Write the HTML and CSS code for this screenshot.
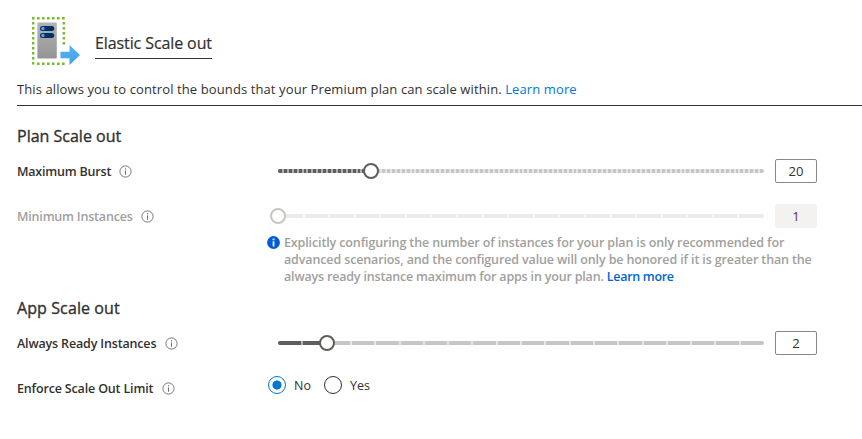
FILE: index.html
```html
<!DOCTYPE html>
<html lang="en">
<head>
<meta charset="utf-8">
<title>Elastic Scale out</title>
<link rel="stylesheet" href="styles.css">
</head>
<body>
<svg class="defs" width="0" height="0" aria-hidden="true">
  <symbol id="info" viewBox="0 0 13 13">
    <circle cx="6.5" cy="6.5" r="5.6" fill="none" stroke="#797775" stroke-width="1"/>
    <path d="M6 3.3h1v1.2H6zM6 5.5h1v4.2H6z" fill="#706e6c"/>
  </symbol>
</svg>
<header class="head">
  <svg class="logo" width="50" height="50" viewBox="0 0 50 50">
    <defs>
      <linearGradient id="tower" x1="0" y1="0" x2="0" y2="1"><stop offset="0" stop-color="#b3b3b3"/><stop offset="1" stop-color="#949494"/></linearGradient>
      <linearGradient id="arrow" x1="0" y1="0" x2="0" y2="1"><stop offset="0" stop-color="#5ab4f5"/><stop offset="1" stop-color="#3f9fea"/></linearGradient>
    </defs>
    <g fill="none" stroke="#76bc2d" stroke-width="2.4" stroke-dasharray="2.6 2.4">
      <path d="M1 2.2H34"/><path d="M2.2 6V50"/><path d="M32.8 6V29"/><path d="M6 47.8H34"/>
    </g>
    <rect x="6.4" y="6.6" width="19.4" height="35.8" rx="1" fill="url(#tower)"/>
    <rect x="9" y="10" width="14.2" height="5" rx="2.5" fill="#003067"/>
    <rect x="9" y="17" width="14.2" height="5" rx="2.5" fill="#003067"/>
    <circle cx="11.9" cy="12.5" r="1.7" fill="#5ea0ef"/><circle cx="11.9" cy="19.5" r="1.7" fill="#5ea0ef"/>
    <path d="M29.5 35.8h9V29L49 39.1 38.5 49v-6.7h-9z" fill="url(#arrow)"/>
  </svg>
  <h1 class="title">Elastic Scale out</h1>
</header>
<p class="intro">This allows you to control the bounds that your Premium plan can scale within. <a class="link">Learn more</a></p>

<section class="plan">
  <h2 class="section-title">Plan Scale out</h2>
  <div class="row">
    <div class="label"><span>Maximum Burst</span><svg class="info"><use href="#info"/></svg></div>
    <div class="slider" data-steps="99" data-value="19"></div>
    <div class="value">20</div>
  </div>
  <div class="row row-min">
    <div class="label muted"><span>Minimum Instances</span><svg class="info"><use href="#info"/></svg></div>
    <div class="slider disabled" data-steps="19" data-value="0"></div>
    <div class="value off">1</div>
  </div>
  <div class="hint">
    <svg class="hint-icon" viewBox="0 0 13 13"><circle cx="6.5" cy="6.5" r="6.4" fill="#015cda"/><path d="M5.6 2.4h1.9v1.8H5.6zM5.6 5.2h1.9v5.4H5.6z" fill="#dce9fb"/></svg>
    <div class="hint-text">
      <div>Explicitly configuring the number of instances for your plan is only recommended for</div>
      <div>advanced scenarios, and the configured value will only be honored if it is greater than the</div>
      <div class="hint-last">always ready instance maximum for apps in your plan. <a class="link hint-link">Learn more</a></div>
    </div>
  </div>
</section>

<section class="app">
  <h2 class="section-title app-title">App Scale out</h2>
  <div class="row">
    <div class="label label-app"><span>Always Ready Instances</span><svg class="info"><use href="#info"/></svg></div>
    <div class="slider" data-steps="20" data-value="2"></div>
    <div class="value">2</div>
  </div>
  <div class="row row-limit">
    <div class="label label-app"><span>Enforce Scale Out Limit</span><svg class="info"><use href="#info"/></svg></div>
    <div class="radios">
      <span class="radio on"></span><span class="choice">No</span>
      <span class="radio"></span><span class="choice">Yes</span>
    </div>
  </div>
</section>
<script src="slider.js"></script>
</body>
</html>
```

FILE: styles.css
```css
* { box-sizing: border-box; }
body {
  margin: 0;
  padding: 16px 0 0 17px;
  background: #fff;
  color: #323130;
  font: 13px/17px "Open Sans", "Noto Sans", sans-serif;
  overflow: hidden;
}
.defs { position: absolute; }
h1, h2, p { margin: 0; }
.head { display: flex; height: 63px; padding-left: 14px; }
.logo { flex: none; }
.title {
  height: 43px;
  width: 117px;
  margin-left: 14px;
  padding-top: 15px;
  border-bottom: 1px solid #323130;
  font-size: 16px;
  line-height: 24px;
  font-weight: 400;
  letter-spacing: -0.1px;
  -webkit-text-stroke: 0.2px;
  white-space: nowrap;
}
.intro { height: 27px; padding-top: 2px; border-bottom: 1px solid #323130; letter-spacing: 0.105px; white-space: nowrap; }
.link { color: #0078d4; }
.section-title { font-size: 16px; line-height: 24px; font-weight: 400; -webkit-text-stroke: 0.35px; white-space: nowrap; }
.app-title { letter-spacing: 0.1px; }
.plan { padding-top: 18px; height: 190px; }
.app { height: 130px; }
.row { display: flex; align-items: center; height: 24px; margin-top: 11px; }
.row-min { margin-top: 21px; }
.row-limit { margin-top: 21px; }
.label { display: flex; align-items: center; width: 261px; font-weight: 600; font-size: 12.5px; letter-spacing: -0.2px; white-space: nowrap; }
.label-app { letter-spacing: -0.16px; }
.muted { color: #a19f9d; }
.info { width: 13px; height: 13px; margin: 1px 0 0 8px; }
.label-app .info { margin-left: 9px; }
.slider { position: relative; width: 486px; height: 4px; border-radius: 2px; background: #c8c6c4; }
.fill { height: 4px; border-radius: 2px; background: #605e5c; }
.tick { position: absolute; top: 0; width: 2px; height: 4px; margin-left: -1px; background: #e6e5e4; }
.tick.past { background: #b3b2b0; }
.thumb {
  position: absolute;
  top: -6px;
  width: 16px;
  height: 16px;
  margin-left: -8px;
  border: 2px solid #605e5c;
  border-radius: 50%;
  background: #fff;
}
.disabled { background: #edebe9; }
.disabled .tick { background: #f8f7f6; }
.disabled .thumb { border-color: #c8c6c4; }
.value {
  width: 42px;
  height: 24px;
  margin-left: 11px;
  border: 1px solid #8a8886;
  border-radius: 2px;
  line-height: 23px;
  text-align: center;
}
.off { border-color: #f3f2f1; background: #f3f2f1; color: #5c2e5c; }
.hint { display: flex; margin: 6px 0 0 250px; color: #a19f9d; font-weight: 600; font-size: 12.5px; letter-spacing: -0.13px; }
.hint-icon { width: 13px; height: 13px; margin: 2px 4px 0 0; }
.hint-text { white-space: nowrap; }
.hint-last { letter-spacing: -0.18px; }
.hint-link { color: #0066cc; letter-spacing: -0.3px; }
.radios { display: flex; align-items: center; margin: -6px 0 0 -10px; font-size: 12.5px; }
.radio { width: 18px; height: 18px; border: 1px solid #323130; border-radius: 50%; }
.radio.on { border-color: #0078d4; background: radial-gradient(circle, #0078d4 4.2px, transparent 4.9px); }
.choice { width: 38px; padding-left: 8px; }
```

FILE: slider.js
```js
document.querySelectorAll('.slider').forEach(function (slider) {
  var steps = Number(slider.dataset.steps);
  var value = Number(slider.dataset.value);
  function add(name, prop, n) {
    var el = document.createElement('div');
    el.className = name;
    el.style[prop] = (n / steps * 100) + '%';
    slider.appendChild(el);
  }
  add('fill', 'width', value);
  for (var i = 1; i < steps; i++) add(i < value ? 'tick past' : 'tick', 'left', i);
  add('thumb', 'left', value);
});
```
